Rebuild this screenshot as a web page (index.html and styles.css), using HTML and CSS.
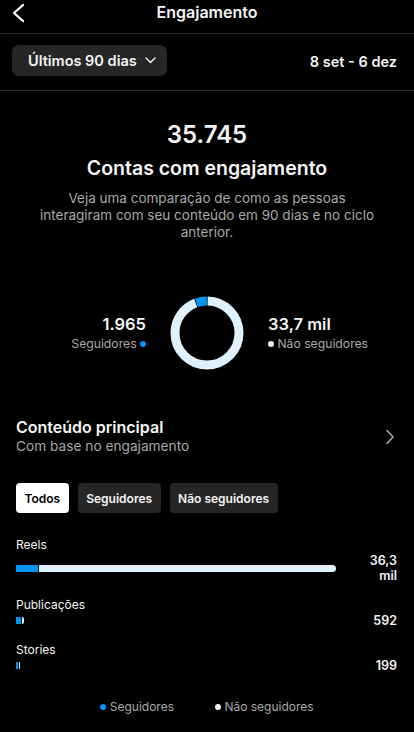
FILE: index.html
```html
<!DOCTYPE html>
<html lang="pt-BR">
<head>
    <meta charset="UTF-8">
    <title>Engajamento</title>
    <link rel="stylesheet" href="styles.css">
</head>
<body>

    <header class="topbar">
      <svg class="back" width="24" height="24" viewBox="0 0 24 24">
        <polyline points="23,5 14,13 23,21" fill="none" stroke="#fff" stroke-width="2.3" stroke-linecap="round" stroke-linejoin="round"/>
      </svg>
      <h1>Engajamento</h1>
    </header>

    <div class="filter-row">
      <button class="period">
        Últimos 90 dias
        <svg width="11" height="7" viewBox="0 0 11 7">
          <polyline points="1,1 5.5,5.5 10,1" fill="none" stroke="#fff" stroke-width="1.3" stroke-linecap="round" stroke-linejoin="round"/>
        </svg>
      </button>
      <span class="dates">8 set - 6 dez</span>
    </div>

    <section class="summary">
      <div class="total">35.745</div>
      <h2>Contas com engajamento</h2>
      <p>Veja uma comparação de como as pessoas interagiram com seu conteúdo em 90 dias e no ciclo anterior.</p>
    </section>

    <section class="split">
      <div class="side left">
        <div class="num">1.965</div>
        <div class="lbl">Seguidores <span class="dot blue"></span></div>
      </div>
      <svg class="donut" width="74" height="74" viewBox="0 0 74 74">
        <g transform="rotate(-90 37 37)">
          <circle cx="37" cy="37" r="32" fill="none" stroke="#e0f1ff" stroke-width="9" stroke-dasharray="188.6 201.06" stroke-dashoffset="-0.6"/>
          <circle cx="37" cy="37" r="32" fill="none" stroke="#0095f6" stroke-width="9" stroke-dasharray="10.6 201.06" stroke-dashoffset="-190"/>
        </g>
      </svg>
      <div class="side right">
        <div class="num">33,7 mil</div>
        <div class="lbl"><span class="dot white"></span> Não seguidores</div>
      </div>
    </section>

    <section class="top-content">
      <div>
        <h3>Conteúdo principal</h3>
        <div class="sub">Com base no engajamento</div>
      </div>
      <svg width="10" height="16" viewBox="0 0 10 16">
        <polyline points="2,1.5 8,8 2,14.5" fill="none" stroke="#a8a8a8" stroke-width="1.6" stroke-linecap="round" stroke-linejoin="round"/>
      </svg>
    </section>

    <div class="tabs">
      <button class="tab active">Todos</button>
      <button class="tab">Seguidores</button>
      <button class="tab">Não seguidores</button>
    </div>

    <section class="types">
      <div class="type">
        <div class="type-name">Reels</div>
        <div class="type-row">
          <div class="track">
            <div class="bar" style="width: 100%">
              <span class="seg-f" style="width: 7%"></span>
              <span class="seg-n"></span>
            </div>
          </div>
          <div class="val">36,3<br>mil</div>
        </div>
      </div>
      <div class="type">
        <div class="type-name">Publicações</div>
        <div class="type-row">
          <div class="track">
            <div class="bar" style="width: 8px">
              <span class="seg-f" style="width: 5px"></span>
              <span class="seg-n"></span>
            </div>
          </div>
          <div class="val">592</div>
        </div>
      </div>
      <div class="type">
        <div class="type-name">Stories</div>
        <div class="type-row">
          <div class="track">
            <div class="bar" style="width: 4px">
              <span class="seg-f" style="width: 2px"></span>
              <span class="seg-n"></span>
            </div>
          </div>
          <div class="val">199</div>
        </div>
      </div>
    </section>

    <div class="legend">
      <span><span class="dot blue"></span> Seguidores</span>
      <span><span class="dot white"></span> Não seguidores</span>
    </div>

</body>
</html>
```

FILE: styles.css
```css
body {
    margin: 0;
    background-color: #000;
    color: #f5f5f5;
    font-family: 'Inter', 'Liberation Sans', sans-serif;
    width: 414px;
    overflow: hidden;
}

.topbar {
    display: flex;
    align-items: center;
    justify-content: center;
    height: 33px;
    border-bottom: 1px solid #262626;
    position: relative;
}

.topbar .back {
    position: absolute;
    left: 0;
    top: 0;
}

.topbar h1 {
    margin: 0 0 9px;
    font-size: 16px;
    font-weight: 600;
    line-height: 20px;
}

.filter-row {
    display: flex;
    align-items: center;
    justify-content: space-between;
    padding: 11px 17px 14px 12px;
    border-bottom: 1px solid #262626;
}

.period {
    display: flex;
    align-items: center;
    gap: 8px;
    height: 31px;
    width: 155px;
    padding: 0 0 0 16px;
    border: none;
    border-radius: 7px;
    background-color: #262626;
    color: #f5f5f5;
    font-family: inherit;
    font-size: 14.5px;
    font-weight: 600;
}

.dates {
    font-size: 14.5px;
    font-weight: 600;
    margin-top: 2px;
}

.summary {
    text-align: center;
    padding: 30px 38px 0;
}

.total {
    font-size: 24px;
    font-weight: 600;
    line-height: 28px;
}

.summary h2 {
    margin: 7px 0 0;
    font-size: 19.5px;
    font-weight: 600;
    line-height: 24px;
}

.summary p {
    margin: 10px 0 0;
    font-size: 13.5px;
    line-height: 17px;
    color: #a8a8a8;
}

.split {
    display: grid;
    grid-template-columns: 1fr 74px 1fr;
    align-items: center;
    column-gap: 24px;
    margin-top: 55px;
}

.side .num {
    font-size: 16.5px;
    font-weight: 600;
    line-height: 20px;
}

.side .lbl {
    font-size: 12.2px;
    line-height: 17px;
    color: #a8a8a8;
    margin-top: 1px;
}

.left {
    text-align: right;
}

.dot {
    display: inline-block;
    width: 6px;
    height: 6px;
    border-radius: 50%;
    vertical-align: 1px;
}

.dot.blue {
    background-color: #0095f6;
}

.dot.white {
    background-color: #f5f5f5;
}

.top-content {
    display: flex;
    align-items: center;
    justify-content: space-between;
    padding: 0 19px 0 16px;
    margin-top: 48px;
}

.top-content h3 {
    margin: 0;
    font-size: 16px;
    font-weight: 600;
    line-height: 19px;
}

.top-content .sub {
    font-size: 13.7px;
    line-height: 18px;
    color: #a8a8a8;
}

.tabs {
    display: flex;
    gap: 9px;
    padding: 0 16px;
    margin-top: 28px;
}

.tab {
    height: 30px;
    padding: 0 8.5px;
    border: none;
    border-radius: 4px;
    background-color: #262626;
    color: #f5f5f5;
    font-family: inherit;
    font-size: 12px;
    font-weight: 600;
}

.tab.active {
    background-color: #fff;
    color: #000;
}

.types {
    padding: 0 17px 0 16px;
    margin-top: 23px;
}

.type {
    margin-bottom: 13px;
}

.type-name {
    font-size: 12px;
    line-height: 17px;
}

.type-row {
    display: flex;
    align-items: center;
    gap: 21px;
}

.track {
    flex: 1;
}

.bar {
    display: flex;
    gap: 1px;
    height: 7px;
}

.seg-f {
    background-color: #0095f6;
}

.seg-n {
    flex: 1;
    background-color: #e0f1ff;
    border-radius: 0 4px 4px 0;
}

.val {
    width: 40px;
    text-align: right;
    font-size: 12.5px;
    font-weight: 600;
    line-height: 15px;
}

.legend {
    display: flex;
    justify-content: center;
    gap: 41px;
    margin-top: 25px;
    font-size: 12px;
    line-height: 17px;
    color: #a8a8a8;
}
```
